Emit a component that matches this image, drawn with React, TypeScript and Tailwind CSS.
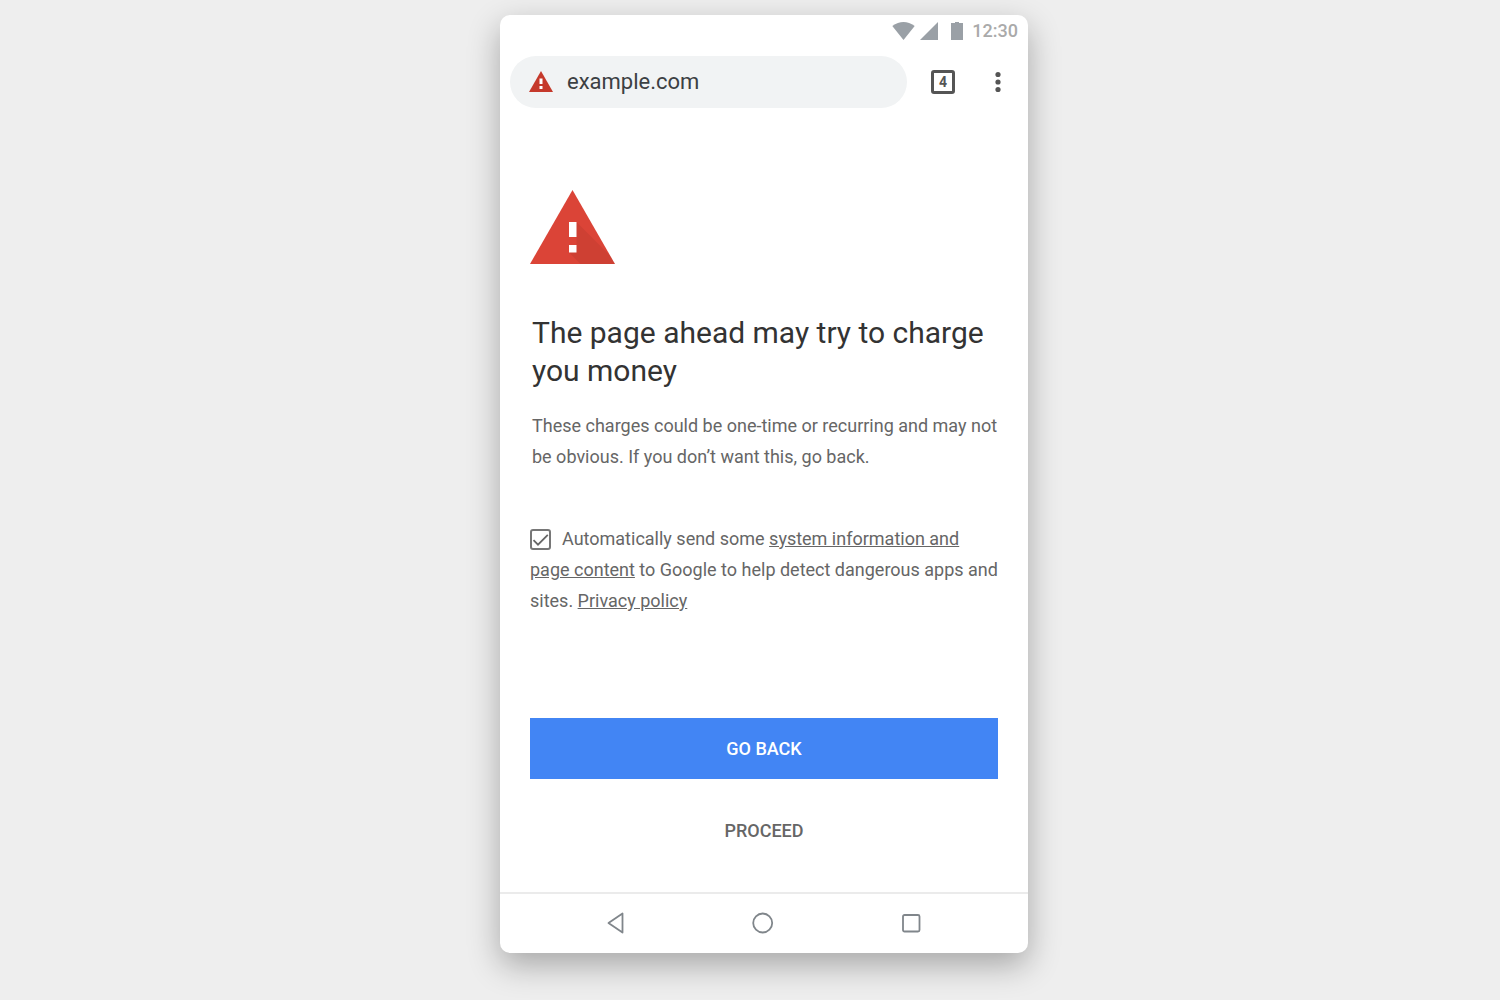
import { useState } from 'react';

function WarningIcon() {
    return (
        <svg viewBox="0 0 85 74" className="h-[74px] w-[85px]" aria-hidden="true">
            <path d="M42.500 0L85 74H0Z" fill="#db4437" />
            <path d="M46.500 32L80.200 65.700L85 74H50.500L39 62.500V55H46.500V47H39Z" fill="#000000" opacity="0.060" />
            <path d="M39 32H46.500V47H39ZM39 55H46.500V62.500H39Z" fill="#ffffff" />
        </svg>
    );
}

function SmallWarningIcon() {
    return (
        <svg width="24" height="21" viewBox="0 0 24 21" className="shrink-0" aria-hidden="true">
            <path d="M12 0L24 21H0Z" fill="#c5392b" />
            <path d="M10.500 7.500H13.500V13H10.500ZM10.500 15H13.500V18H10.500Z" fill="#ffffff" />
        </svg>
    );
}

function StatusBar() {
    return (
        <div className="flex h-8 items-center justify-end pr-[10px] text-[#9aa0a6]">
            <svg width="23" height="18" viewBox="0 0 23 18" fill="currentColor" aria-hidden="true">
                <path d="M0.300 4Q11.500 -4 22.700 4L11.500 18Z" />
            </svg>
            <svg width="18" height="18" viewBox="0 0 18 18" className="ml-[5px]" fill="currentColor" aria-hidden="true">
                <path d="M18 0V18H0Z" />
            </svg>
            <svg width="12" height="18" viewBox="0 0 12 18" className="ml-[13px]" fill="currentColor" aria-hidden="true">
                <path d="M0 1H4V0H8V1H12V18H0Z" />
            </svg>
            <span className="ml-[9px] text-lg font-medium text-[#aaaaaa]">12:30</span>
        </div>
    );
}

function Toolbar() {
    const [url, setUrl] = useState('example.com');

    return (
        <div className="mt-[9px] flex items-center pl-[10px] pr-[19px]">
            <label className="flex h-[52px] min-w-0 flex-1 items-center rounded-full bg-[#f1f3f4] pb-[2px] pl-[19px] pr-4">
                <SmallWarningIcon />
                <input
                    type="text"
                    aria-label="Address"
                    value={url}
                    onChange={(e) => setUrl(e.target.value)}
                    className="ml-[14px] min-w-0 flex-1 bg-transparent text-[22px] text-[#3c4043] outline-none"
                />
            </label>
            <button
                type="button"
                aria-label="Open tabs"
                className="ml-6 flex size-6 items-center justify-center rounded-[3px] border-3 border-[#555555] text-sm font-bold text-[#555555]"
            >
                4
            </button>
            <button type="button" aria-label="Menu" className="ml-8 flex h-6 w-[22px] items-center justify-center text-[#555555]">
                <svg width="6" height="22" viewBox="0 0 6 22" fill="currentColor" aria-hidden="true">
                    <circle cx="3" cy="3.500" r="2.600" />
                    <circle cx="3" cy="11" r="2.600" />
                    <circle cx="3" cy="18.500" r="2.600" />
                </svg>
            </button>
        </div>
    );
}

function Consent() {
    const [checked, setChecked] = useState(true);

    return (
        <label className="mt-[51px] block text-lg/[31px]">
            <span className="relative mr-[11px] inline-block size-[21px] align-[-5px]">
                <input
                    type="checkbox"
                    checked={checked}
                    onChange={(e) => setChecked(e.target.checked)}
                    className="peer block size-[21px] appearance-none rounded-[3px] border-2 border-[#777777]"
                />
                <svg
                    viewBox="0 0 21 21"
                    className="pointer-events-none absolute inset-0 hidden size-[21px] peer-checked:block"
                    fill="none"
                    stroke="#666666"
                    strokeWidth="1.800"
                    aria-hidden="true"
                >
                    <path d="M3.500 11.200L8 15.700L17.800 5.900" />
                </svg>
            </span>
            Automatically send some <a href="#system" className="underline">system information and page content</a> to
            Google to help detect dangerous apps and sites. <a href="#privacy" className="underline">Privacy policy</a>
        </label>
    );
}

function NavigationBar() {
    return (
        <nav className="flex h-[61px] items-center justify-between border-t-2 border-[#ebebeb] pb-px pl-[103px] pr-[105px] text-[#80868b]">
            <button type="button" aria-label="Back">
                <svg width="24" height="24" viewBox="0 0 24 24" fill="none" stroke="currentColor" strokeWidth="1.800" strokeLinejoin="round" aria-hidden="true">
                    <path d="M19.500 2.500V21.500L5.500 12Z" />
                </svg>
            </button>
            <button type="button" aria-label="Home">
                <svg width="24" height="24" viewBox="0 0 24 24" fill="none" stroke="currentColor" strokeWidth="1.800" aria-hidden="true">
                    <circle cx="11.700" cy="12" r="9.500" />
                </svg>
            </button>
            <button type="button" aria-label="Recent apps">
                <svg width="24" height="24" viewBox="0 0 24 24" fill="none" stroke="currentColor" strokeWidth="1.800" aria-hidden="true">
                    <rect x="4" y="4" width="16.500" height="16.500" rx="1.500" />
                </svg>
            </button>
        </nav>
    );
}

function App() {
    return (
        <div className="flex min-h-screen items-start justify-center bg-[#eeeeee] pb-[46px] pl-7 pt-[15px] font-[Roboto,sans-serif]">
            <div className="flex w-full max-w-[528px] flex-col rounded-[10px] bg-white shadow-[0_12px_32px_rgba(0,0,0,0.3)]">
                <StatusBar />
                <Toolbar />
                <main className="flex flex-col px-[30px] pt-[82px] text-[#666666]">
                    <WarningIcon />
                    <h1 className="mt-[50px] pl-[2px] text-[30px]/[38px] text-[#333333]">
                        The page ahead may try to charge you money
                    </h1>
                    <p className="mt-5 pl-[2px] text-lg/[31px]">
                        These charges could be one-time or recurring and may not be obvious. If you don’t want this, go back.
                    </p>
                    <Consent />
                    <button type="button" className="mt-[102px] h-[61px] bg-[#4285f4] text-lg font-medium text-white">
                        GO BACK
                    </button>
                    <button type="button" className="mb-[31px] mt-[21px] h-[61px] text-lg font-medium">
                        PROCEED
                    </button>
                </main>
                <NavigationBar />
            </div>
        </div>
    );
}

export default App;
